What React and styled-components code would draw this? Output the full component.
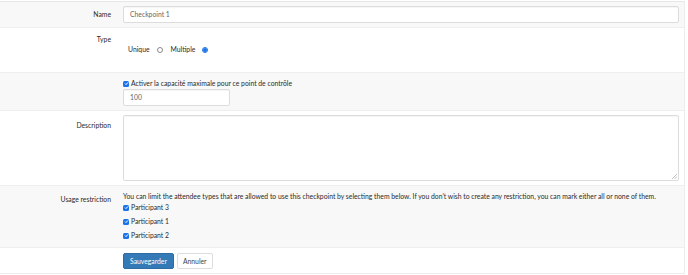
import React from 'react';
import styled, { createGlobalStyle } from 'styled-components';

const GlobalStyle = createGlobalStyle`
  body {
    margin: 0;
    background: #fff;
    font-family: Lato, "Open Sans", sans-serif;
    font-size: 6.8px;
    color: #2b2b2b;
  }
`;

const Panel = styled.div`
  width: 684px;
  margin-top: 1px;
  border-top: 1px solid #e6e6e6;
  border-right: 1px solid #ececec;
  border-bottom: 1px solid #ececec;
`;

const Row = styled.div`
  display: grid;
  grid-template-columns: 123px 1fr;
  align-items: start;
  height: ${(p) => p.height}px;
  box-sizing: border-box;
  padding-top: ${(p) => p.top || 0}px;
  background: ${(p) => (p.grey ? '#f8f8f8' : '#fff')};
  border-top: 1px solid #eeeeee;
  &:first-child {
    border-top: none;
  }
`;

const Label = styled.div`
  text-align: right;
  padding-right: 12px;
  padding-top: ${(p) => p.top || 0}px;
  line-height: 9px;
`;

const Field = styled.div`
  padding-right: 5px;
  display: flex;
  flex-direction: column;
  gap: ${(p) => p.gap || 0}px;
`;

const TextInput = styled.div`
  height: 17px;
  width: ${(p) => p.width || 'auto'};
  box-sizing: border-box;
  border: 1px solid #dcdcdc;
  border-radius: 2px;
  background: #fff;
  padding: 0 6px;
  line-height: 15px;
  color: #666;
  box-shadow: inset 0 1px 1px rgba(0, 0, 0, 0.04);
`;

const TextArea = styled.div`
  position: relative;
  height: 66px;
  box-sizing: border-box;
  border: 1px solid #dcdcdc;
  border-radius: 2px;
  background: #fff;
  box-shadow: inset 0 1px 1px rgba(0, 0, 0, 0.04);
`;

const Grip = styled.svg`
  position: absolute;
  right: 1px;
  bottom: 1px;
`;

const RadioLine = styled.div`
  display: flex;
  align-items: center;
  padding-left: 5px;
  margin-top: 12px;
  line-height: 9px;
`;

const Radio = styled.span`
  width: 6px;
  height: 6px;
  border-radius: 50%;
  margin: 0 8px 0 7px;
  box-sizing: border-box;
  border: 1px solid ${(p) => (p.checked ? '#1a73e8' : '#8a8a8a')};
  background: #fff;
  display: flex;
  align-items: center;
  justify-content: center;
  &::after {
    content: '';
    display: ${(p) => (p.checked ? 'block' : 'none')};
    width: 4px;
    height: 4px;
    border-radius: 50%;
    background: #1a73e8;
  }
`;

const CheckLine = styled.label`
  display: flex;
  align-items: center;
  line-height: 9px;
  margin-top: ${(p) => p.space || 0}px;
`;

const Box = styled.span`
  width: 6px;
  height: 6px;
  border-radius: 1.5px;
  background: #1a73e8;
  display: inline-flex;
  align-items: center;
  justify-content: center;
  margin-right: 2px;
`;

const Note = styled.div`
  line-height: 9px;
`;

const Buttons = styled.div`
  display: flex;
  gap: 3px;
  padding-top: 1px;
`;

const Button = styled.button`
  height: 16px;
  padding: 0 ${(p) => (p.primary ? 6 : 5)}px;
  font-family: inherit;
  font-size: 6.8px;
  border-radius: 2px;
  border: 1px solid ${(p) => (p.primary ? '#2e6da4' : '#ddd')};
  background: ${(p) => (p.primary ? '#337ab7' : '#fff')};
  color: ${(p) => (p.primary ? '#fff' : '#444')};
`;

const Check = ({ children, space }) => (
  <CheckLine space={space}>
    <Box>
      <svg width="5" height="5" viewBox="0 0 10 10">
        <path d="M2 5.2l2 2 4-4.5" stroke="#fff" strokeWidth="2" fill="none" />
      </svg>
    </Box>
    {children}
  </CheckLine>
);

export default function App() {
  return (
    <>
      <GlobalStyle />
      <Panel>
        <Row grey height={25} top={4}>
          <Label top={4}>Name</Label>
          <Field>
            <TextInput>Checkpoint 1</TextInput>
          </Field>
        </Row>
        <Row height={45} top={5}>
          <Label top={2}>Type</Label>
          <Field>
            <RadioLine>
              Unique <Radio /> Multiple <Radio checked />
            </RadioLine>
          </Field>
        </Row>
        <Row grey height={38} top={6}>
          <Label />
          <Field gap={1}>
            <Check>Activer la capacité maximale pour ce point de contrôle</Check>
            <TextInput width="107px">100</TextInput>
          </Field>
        </Row>
        <Row height={75} top={4}>
          <Label top={6}>Description</Label>
          <Field>
            <TextArea>
              <Grip width="5" height="5" viewBox="0 0 5 5">
                <path d="M5 0L0 5M5 2.5L2.5 5" stroke="#aaa" strokeWidth="0.7" />
              </Grip>
            </TextArea>
          </Field>
        </Row>
        <Row grey height={62} top={6}>
          <Label top={3}>Usage restriction</Label>
          <Field>
            <Note>
              You can limit the attendee types that are allowed to use this checkpoint by selecting them below. If you don't wish to create any restriction, you can mark either all or none of them.
            </Note>
            <Check space={2}>Participant 3</Check>
            <Check space={5}>Participant 1</Check>
            <Check space={5}>Participant 2</Check>
          </Field>
        </Row>
        <Row height={26} top={4}>
          <Label />
          <Buttons>
            <Button primary>Sauvegarder</Button>
            <Button>Annuler</Button>
          </Buttons>
        </Row>
      </Panel>
    </>
  );
}
